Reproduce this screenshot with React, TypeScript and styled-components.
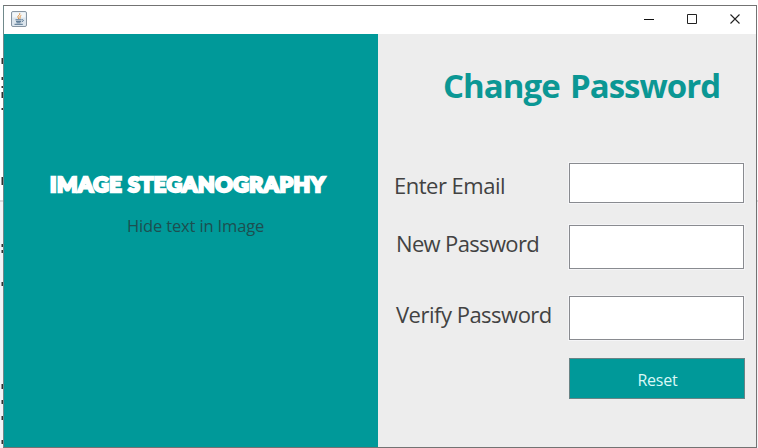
import React from "react";
import styled, { createGlobalStyle } from "styled-components";

const GlobalStyle = createGlobalStyle`
  * { box-sizing: border-box; }
  body { margin: 0; background: #fff; overflow: hidden; }
`;

const Desktop = styled.div`
  width: 758px;
  height: 448px;
  padding: 5px 1px 0 3px;
  background: linear-gradient(to bottom, #fff 0 200px, #d9d9dc 200px 202px, #f3f3f6 202px);
  position: relative;
  font-family: "Open Sans", "Noto Sans", sans-serif;
`;

const Speck = styled.i<{ $y: number; $h: number }>`
  position: absolute;
  left: 0;
  top: ${(p) => p.$y}px;
  width: 3px;
  height: ${(p) => p.$h}px;
  background: linear-gradient(to right, transparent 1px, #333 2px);
`;

const Window = styled.div`
  width: 754px;
  height: 443px;
  border: 1px solid #737373;
  border-left-color: #70898b;
  display: flex;
  flex-direction: column;
`;

const TitleBar = styled.header`
  height: 28px;
  flex: none;
  background: #fff;
  display: flex;
  align-items: center;
  justify-content: space-between;
  padding: 0 15px 2px 7px;
`;

const Controls = styled.div`
  display: flex;
  align-items: center;
  gap: 31px;
  svg { display: block; }
`;

const Body = styled.div`
  flex: 1;
  display: flex;
  min-height: 0;
`;

const Brand = styled.aside`
  width: 374px;
  background: #009999;
  display: flex;
  flex-direction: column;
  align-items: flex-start;
`;

const BrandName = styled.div`
  margin: 138px 0 0 46px;
  height: 24px;
  line-height: 25px;
  font-family: Lato, sans-serif;
  font-weight: 900;
  font-size: 21.5px;
  letter-spacing: 0.55px;
  color: #fff;
  -webkit-text-stroke: 2.4px #fff;
  white-space: nowrap;
`;

const Tagline = styled.div`
  margin: 18px 0 0 123px;
  height: 24px;
  line-height: 24px;
  font-size: 16.5px;
  letter-spacing: -0.15px;
  color: #1d4f50;
  white-space: nowrap;
`;

const Panel = styled.main`
  flex: 1;
  background: #ededed;
  padding-left: 16px;
`;

const Heading = styled.h1`
  margin: 30px 0 0 49px;
  height: 44px;
  line-height: 44px;
  font-size: 33px;
  font-weight: 700;
  letter-spacing: -0.95px;
  word-spacing: 2.5px;
  color: #0b9794;
  white-space: nowrap;
`;

const Form = styled.form`
  margin-top: 55px;
`;

const Row = styled.div<{ $h: number; $gap: number }>`
  display: flex;
  height: ${(p) => p.$h}px;
  margin-bottom: ${(p) => p.$gap}px;
`;

const Label = styled.label<{ $x: number; $y: number; $ls: number }>`
  width: 175px;
  height: 30px;
  line-height: 30px;
  padding-left: ${(p) => p.$x}px;
  margin-top: ${(p) => p.$y}px;
  font-size: 22px;
  letter-spacing: ${(p) => p.$ls}px;
  color: #424242;
  white-space: nowrap;
`;

const Field = styled.input`
  width: 175px;
  height: 100%;
  border: 1px solid #898b90;
  border-radius: 0;
  background: #fff;
  outline: none;
  box-shadow: 0 0 0 1px #f5f5f7;
`;

const Reset = styled.button`
  display: block;
  margin-left: 175px;
  width: 176px;
  height: 41px;
  padding: 3px 0 0 1px;
  border: 1px solid #698486;
  background: #009999;
  color: #d9f8f6;
  font: 16px/24px "Open Sans", "Noto Sans", sans-serif;
  letter-spacing: -0.2px;
`;

const JavaIcon = () => (
  <svg width="16" height="16" viewBox="0 0 16 16" fill="none">
    <rect x=".5" y=".5" width="15" height="15" rx="1.5" fill="#dce5ed" stroke="#8795a2" />
    <path d="M1.5 1.5h13v5h-13z" fill="#f3f6f8" />
    <path d="M8.8 2.2C9.5 4 6 4.7 7 6.3c.4.6.8 1 .5 1.7M10.3 4.4C7.8 5.5 9.8 6.3 8.8 7.8" stroke="#e08a32" />
    <path d="M4.5 8.8h6M5 10.4h5M5.5 11.8h4M10.7 8.8c2.5-.5 2 1.6 0 2M3.5 13.3h8.3" stroke="#50718d" />
  </svg>
);

export default function App() {
  return (
    <>
      <GlobalStyle />
      <Desktop>
        {[[58, 6], [77, 3], [86, 2], [92, 6], [108, 2], [177, 8], [244, 3], [250, 3], [282, 4], [384, 5], [400, 4], [416, 4], [440, 4]].map(([y, h]) => (
          <Speck key={y} $y={y} $h={h} />
        ))}
        <Window>
          <TitleBar>
            <JavaIcon />
            <Controls>
              <svg width="12" height="12" viewBox="0 0 12 12"><path d="M1 6.5h10" stroke="#111" /></svg>
              <svg width="12" height="12" viewBox="0 0 12 12"><path d="M1.5 1.5h9v9h-9z" fill="none" stroke="#222" /></svg>
              <svg width="12" height="12" viewBox="0 0 12 12"><path d="M1.5 1.5l9 9m0-9l-9 9" stroke="#222" strokeWidth="1.1" /></svg>
            </Controls>
          </TitleBar>
          <Body>
            <Brand>
              <BrandName>IMAGE STEGANOGRAPHY</BrandName>
              <Tagline>Hide text in Image</Tagline>
            </Brand>
            <Panel>
              <Heading>Change Password</Heading>
              <Form onSubmit={(e) => e.preventDefault()}>
                <Row $h={40} $gap={22}>
                  <Label htmlFor="email" $x={0} $y={7} $ls={-0.5}>Enter Email</Label>
                  <Field id="email" />
                </Row>
                <Row $h={44} $gap={27}>
                  <Label htmlFor="next" $x={2} $y={3} $ls={-0.65}>New Password</Label>
                  <Field id="next" type="password" />
                </Row>
                <Row $h={44} $gap={18}>
                  <Label htmlFor="verify" $x={2} $y={3} $ls={-0.5}>Verify Password</Label>
                  <Field id="verify" type="password" />
                </Row>
                <Reset type="submit">Reset</Reset>
              </Form>
            </Panel>
          </Body>
        </Window>
      </Desktop>
    </>
  );
}
